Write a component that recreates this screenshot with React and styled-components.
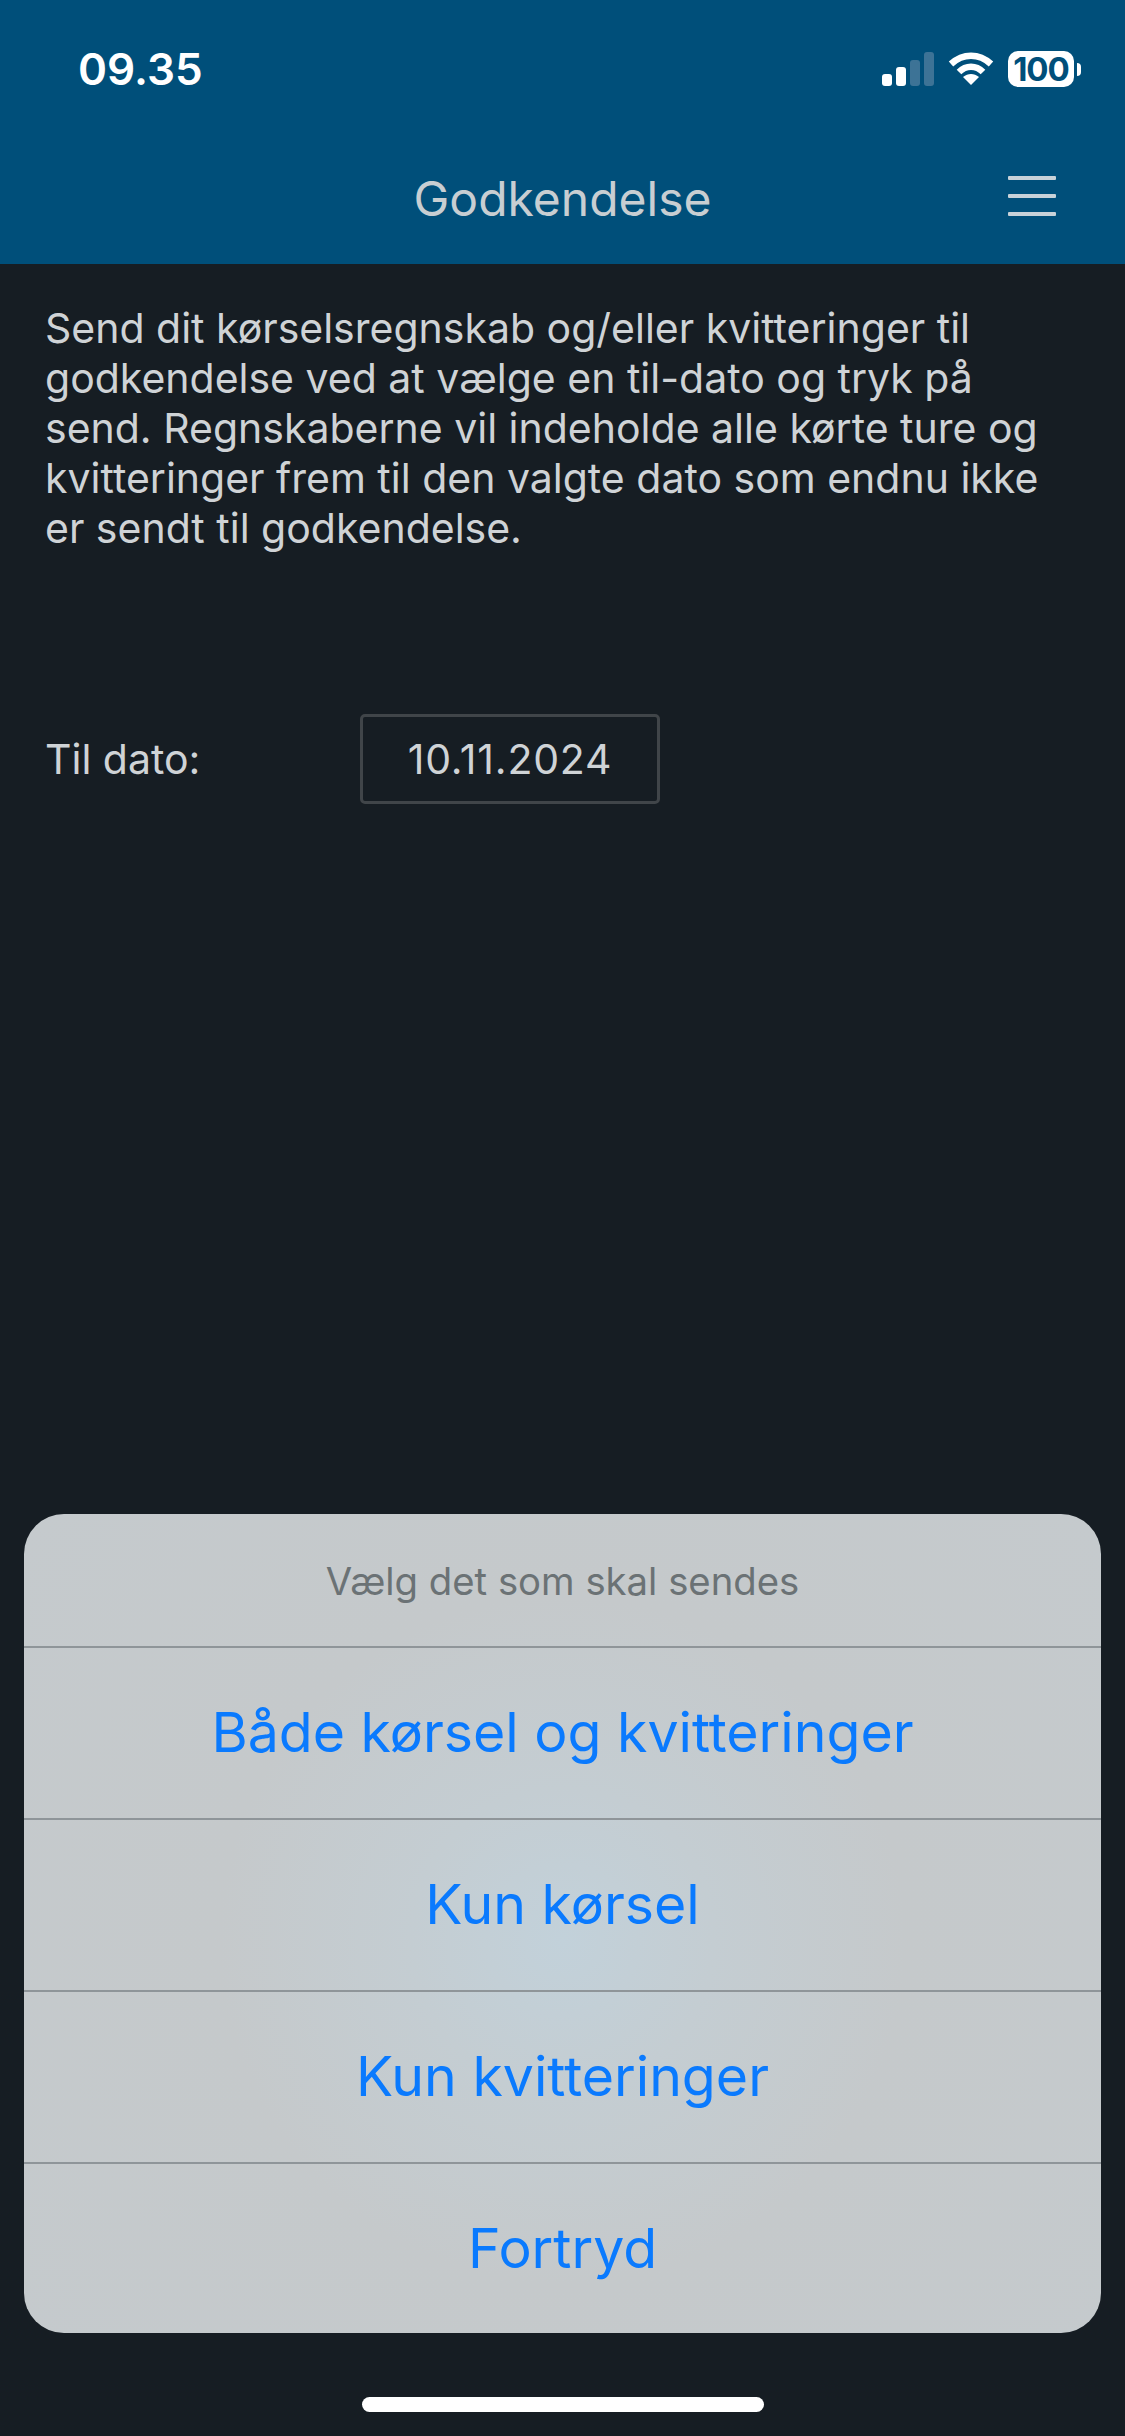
import React from "react";
import styled, { createGlobalStyle } from "styled-components";

const Global = createGlobalStyle`
  html, body { margin: 0; padding: 0; background: #161d23; }
  body { font-family: Inter, "Liberation Sans", sans-serif; }
`;

const Page = styled.div`
  position: relative;
  width: 1125px;
  height: 2436px;
  overflow: hidden;
  background: #161d23;
  display: flex;
  flex-direction: column;
`;

const Header = styled.header`
  height: 264px;
  flex: none;
  background: #004f7a;
  display: flex;
  flex-direction: column;
`;

const StatusBar = styled.div`
  height: 132px;
  padding: 6px 44px 0 78px;
  display: flex;
  align-items: center;
  justify-content: space-between;
  box-sizing: border-box;
`;

const Time = styled.span`
  color: #fff;
  font-size: 44px;
  font-weight: 600;
`;

const StatusIcons = styled.div`
  display: flex;
  align-items: center;
  gap: 14px;
`;

const NavBar = styled.div`
  flex: 1;
  display: flex;
  align-items: center;
  justify-content: center;
  position: relative;
`;

const NavTitle = styled.h1`
  margin: 0;
  color: #c8ced2;
  font-size: 48px;
  font-weight: 400;
`;

const MenuIcon = styled.svg`
  position: absolute;
  right: 69px;
  top: 44px;
`;

const Content = styled.main`
  padding: 39px 45px 0;
  flex: 1;
`;

const Intro = styled.p`
  margin: 0;
  color: #cfd3d6;
  font-size: 41px;
  line-height: 50px;
`;

const DateRow = styled.div`
  display: flex;
  align-items: center;
  margin-top: 161px;
`;

const DateLabel = styled.span`
  width: 315px;
  color: #cfd3d6;
  font-size: 41px;
`;

const DateField = styled.div`
  width: 300px;
  height: 90px;
  box-sizing: border-box;
  border: 3px solid #404549;
  border-radius: 5px;
  display: flex;
  align-items: center;
  justify-content: center;
  color: #cfd3d6;
  font-size: 41px;
  letter-spacing: 0.8px;
`;

const Sheet = styled.div`
  position: absolute;
  left: 24px;
  right: 24px;
  top: 1514px;
  height: 819px;
  border-radius: 40px;
  overflow: hidden;
  background: radial-gradient(circle at 50% 52%, #c2d1da 0, #c4cdd2 22%, #c5c9cb 50%, #c5cacd 100%);
`;

const SheetTitle = styled.div`
  height: 132px;
  display: flex;
  align-items: center;
  justify-content: center;
  color: #6b7275;
  font-size: 38.3px;
  padding-top: 1px;
  box-sizing: border-box;
`;

const SheetButton = styled.div`
  height: 172px;
  box-sizing: border-box;
  border-top: 2px solid #8f9599;
  padding-bottom: 3px;
  display: flex;
  align-items: center;
  justify-content: center;
  color: #0a7afe;
  font-size: 55.4px;
`;

const HomeBar = styled.div`
  position: absolute;
  left: 362px;
  top: 2397px;
  width: 402px;
  height: 15px;
  border-radius: 8px;
  background: #fff;
`;

const Signal = () => (
  <svg width="52" height="34" viewBox="0 0 52 34">
    <rect x="0" y="22" width="10" height="12" rx="3" fill="#fff" />
    <rect x="14" y="15" width="10" height="19" rx="3" fill="#fff" />
    <rect x="28" y="8" width="10" height="26" rx="3" fill="#3d7396" />
    <rect x="42" y="0" width="10" height="34" rx="3" fill="#3d7396" />
  </svg>
);

const Wifi = () => (
  <svg width="46" height="34" viewBox="0 0 46 34" fill="none">
    <path d="M3 12 C15 1 31 1 43 12" stroke="#fff" strokeWidth="6.5" />
    <path d="M11 20 C18 13 28 13 35 20" stroke="#fff" strokeWidth="6.5" />
    <path d="M23 33 L15 25 C20 21 26 21 31 25 Z" fill="#fff" />
  </svg>
);

const BatteryWrap = styled.div`
  display: flex;
  align-items: center;
  gap: 3px;
`;

const BatteryBody = styled.div`
  width: 66px;
  height: 36px;
  border-radius: 10px;
  background: #fff;
  color: #004f7a;
  font-size: 33px;
  font-weight: 700;
  letter-spacing: -1px;
  display: flex;
  align-items: center;
  justify-content: center;
`;

const BatteryCap = styled.div`
  width: 4px;
  height: 13px;
  border-radius: 0 4px 4px 0;
  background: #fff;
`;

export default function App() {
  return (
    <Page>
      <Global />
      <Header>
        <StatusBar>
          <Time>09.35</Time>
          <StatusIcons>
            <Signal />
            <Wifi />
            <BatteryWrap>
              <BatteryBody>100</BatteryBody>
              <BatteryCap />
            </BatteryWrap>
          </StatusIcons>
        </StatusBar>
        <NavBar>
          <NavTitle>Godkendelse</NavTitle>
          <MenuIcon width="48" height="42" viewBox="0 0 48 42">
            <rect x="0" y="0" width="48" height="4" rx="1" fill="#c8d2d9" />
            <rect x="0" y="18" width="48" height="4" rx="1" fill="#c8d2d9" />
            <rect x="0" y="36" width="48" height="4" rx="1" fill="#c8d2d9" />
          </MenuIcon>
        </NavBar>
      </Header>
      <Content>
        <Intro>
          Send dit kørselsregnskab og/eller kvitteringer til<br />
          godkendelse ved at vælge en til-dato og tryk på<br />
          send. Regnskaberne vil indeholde alle kørte ture og<br />
          kvitteringer frem til den valgte dato som endnu ikke<br />
          er sendt til godkendelse.
        </Intro>
        <DateRow>
          <DateLabel>Til dato:</DateLabel>
          <DateField>10.11.2024</DateField>
        </DateRow>
      </Content>
      <Sheet>
        <SheetTitle>Vælg det som skal sendes</SheetTitle>
        <SheetButton>Både kørsel og kvitteringer</SheetButton>
        <SheetButton>Kun kørsel</SheetButton>
        <SheetButton>Kun kvitteringer</SheetButton>
        <SheetButton>Fortryd</SheetButton>
      </Sheet>
      <HomeBar />
    </Page>
  );
}
